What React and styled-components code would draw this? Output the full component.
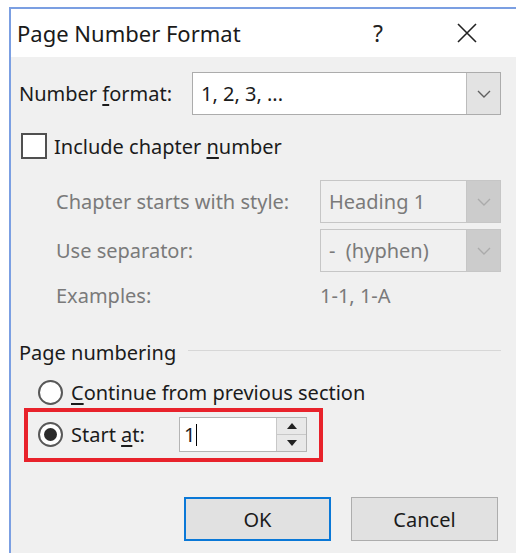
import React from 'react';
import styled, { createGlobalStyle } from 'styled-components';

const GlobalStyle = createGlobalStyle`
  html, body {
    margin: 0;
    background: #ffffff;
    overflow: hidden;
  }
  body {
    font-family: "Noto Sans", "Open Sans", sans-serif;
  }
`;

const Window = styled.div`
  margin: 7px 0 0 9px;
  height: 560px;
  border-top: 2px solid #7b9fe2;
  border-left: 2px solid #7b9fe2;
  background: #f0f0f0;
  color: #1b1b1b;
  font-size: 20px;
`;

const TitleBar = styled.div`
  height: 48px;
  background: #ffffff;
  display: flex;
  align-items: center;
  padding: 0 5px 0 6px;
`;

const Title = styled.div`
  flex: 1;
  font-size: 22px;
  color: #1a1a1a;
`;

const CaptionButton = styled.div`
  width: ${p => p.$w}px;
  height: 100%;
  display: flex;
  align-items: center;
  justify-content: center;
  font-size: 23px;
  color: #222;
`;

const Body = styled.div`
  padding: 16px 15px 0 8px;
`;

const Row = styled.div`
  display: flex;
  align-items: center;
  margin-top: ${p => p.$mt || 0}px;
  height: ${p => p.$h}px;
`;

const Label = styled.span`
  width: ${p => p.$w}px;
  flex-shrink: 0;
  white-space: nowrap;
  color: ${p => (p.$dim ? '#7a7a7a' : 'inherit')};
`;

const Key = styled.span`
  text-decoration: underline;
  text-underline-offset: 3px;
`;

const Combo = styled.div`
  display: flex;
  box-sizing: border-box;
  width: ${p => p.$w}px;
  height: 43px;
  border: 1px solid ${p => (p.$off ? '#c6c6c6' : '#acacac')};
  background: ${p => (p.$off ? '#f0f0f0' : '#ffffff')};
`;

const ComboValue = styled.span`
  flex: 1;
  display: flex;
  align-items: center;
  padding-left: 8px;
  color: ${p => (p.$off ? '#7a7a7a' : '#1b1b1b')};
  white-space: pre;
`;

const ComboButton = styled.span`
  width: 33px;
  display: flex;
  align-items: center;
  justify-content: center;
  border-left: 1px solid ${p => (p.$off ? '#c6c6c6' : '#bcbcbc')};
  background: ${p => (p.$off ? '#cccccc' : '#e3e3e3')};
`;

const CheckBox = styled.span`
  box-sizing: border-box;
  width: 26px;
  height: 26px;
  margin: 0 7px 0 2px;
  border: 2px solid #505050;
  background: #ffffff;
`;

const ChapterGrid = styled.div`
  display: grid;
  grid-template-columns: 264px 181px;
  grid-template-rows: 43px 43px 34px;
  row-gap: 6px;
  align-items: center;
  margin-top: 21px;
  padding-left: 37px;
`;

const Legend = styled.div`
  display: flex;
  align-items: center;
  height: 24px;
  margin-top: 28px;
  &::after {
    content: '';
    flex: 1;
    margin-left: 12px;
    margin-top: -3px;
    border-top: 1px solid #d7d7d7;
  }
`;

const Radio = styled.span`
  box-sizing: border-box;
  width: 25px;
  height: 25px;
  margin-right: 8px;
  border-radius: 50%;
  border: 2px solid #585858;
  background: #ffffff;
  display: flex;
  align-items: center;
  justify-content: center;
  &::after {
    content: '';
    width: 13px;
    height: 13px;
    border-radius: 50%;
    background: ${p => (p.$on ? '#2b2b2b' : 'transparent')};
  }
`;

const OptionRow = styled.div`
  display: flex;
  align-items: center;
  height: 24px;
  margin-top: 16px;
  padding-left: 19px;
`;

const Highlight = styled.div`
  display: flex;
  align-items: center;
  width: fit-content;
  margin: 4px 0 0 5px;
  padding: 5px 12px 6px 10px;
  border: 4px solid #e8222b;
`;

const SpinBox = styled.div`
  display: flex;
  box-sizing: border-box;
  width: 128px;
  height: 35px;
  border: 1px solid #b4b4b4;
  background: #ffffff;
`;

const SpinText = styled.span`
  flex: 1;
  display: flex;
  align-items: center;
  padding-left: 4px;
`;

const Caret = styled.span`
  width: 1px;
  height: 22px;
  margin-left: 1px;
  background: #000;
`;

const SpinButtons = styled.span`
  width: 29px;
  display: flex;
  flex-direction: column;
  border-left: 1px solid #c8c8c8;
`;

const SpinHalf = styled.span`
  flex: 1;
  display: flex;
  align-items: center;
  justify-content: center;
  background: #e8e8e8;
  & + & {
    border-top: 1px solid #c8c8c8;
  }
`;

const Buttons = styled.div`
  display: flex;
  justify-content: flex-end;
  gap: 20px;
  margin: 35px 3px 0 0;
`;

const Button = styled.button`
  box-sizing: border-box;
  width: 147px;
  height: 44px;
  font-family: inherit;
  font-size: 20px;
  color: #1b1b1b;
  background: #e1e1e1;
  border: ${p => (p.$primary ? '2px solid #0a78d7' : '1px solid #adadad')};
  padding: 0;
`;

const Chevron = ({ off }) => (
  <svg width="14" height="8" viewBox="0 0 14 8">
    <polyline points="1,1 7,7 13,1" fill="none" stroke={off ? '#ababab' : '#606060'} strokeWidth="1.4" />
  </svg>
);

const Arrow = ({ up }) => (
  <svg width="10" height="6" viewBox="0 0 10 6">
    <polygon points={up ? '5,0 10,6 0,6' : '0,0 10,0 5,6'} fill="#222" />
  </svg>
);

const CloseGlyph = () => (
  <svg width="20" height="20" viewBox="0 0 20 20">
    <path d="M1 1 L19 19 M19 1 L1 19" stroke="#222" strokeWidth="1.6" />
  </svg>
);

function Select({ value, width, off }) {
  return (
    <Combo $w={width} $off={off}>
      <ComboValue $off={off}>{value}</ComboValue>
      <ComboButton $off={off}>
        <Chevron off={off} />
      </ComboButton>
    </Combo>
  );
}

export default function App() {
  return (
    <>
      <GlobalStyle />
      <Window>
        <TitleBar>
          <Title>Page Number Format</Title>
          <CaptionButton $w={90}>?</CaptionButton>
          <CaptionButton $w={88}>
            <CloseGlyph />
          </CaptionButton>
        </TitleBar>
        <Body>
          <Row $h={41}>
            <Label $w={173}>
              Number <Key>f</Key>ormat:
            </Label>
            <Select value="1, 2, 3, ..." width={309} />
          </Row>

          <Row $h={26} $mt={19}>
            <CheckBox />
            <span>
              Include chapter <Key>n</Key>umber
            </span>
          </Row>

          <ChapterGrid>
            <Label $dim>Chapter starts with style:</Label>
            <Select value="Heading 1" width={181} off />
            <Label $dim>Use separator:</Label>
            <Select value="-  (hyphen)" width={181} off />
            <Label $dim>Examples:</Label>
            <Label $dim>1-1, 1-A</Label>
          </ChapterGrid>

          <Legend>Page numbering</Legend>

          <OptionRow>
            <Radio />
            <span>
              <Key>C</Key>ontinue from previous section
            </span>
          </OptionRow>

          <Highlight>
            <Radio $on />
            <Label $w={108}>
              Start <Key>a</Key>t:
            </Label>
            <SpinBox>
              <SpinText>
                1<Caret />
              </SpinText>
              <SpinButtons>
                <SpinHalf>
                  <Arrow up />
                </SpinHalf>
                <SpinHalf>
                  <Arrow />
                </SpinHalf>
              </SpinButtons>
            </SpinBox>
          </Highlight>

          <Buttons>
            <Button $primary>OK</Button>
            <Button>Cancel</Button>
          </Buttons>
        </Body>
      </Window>
    </>
  );
}
